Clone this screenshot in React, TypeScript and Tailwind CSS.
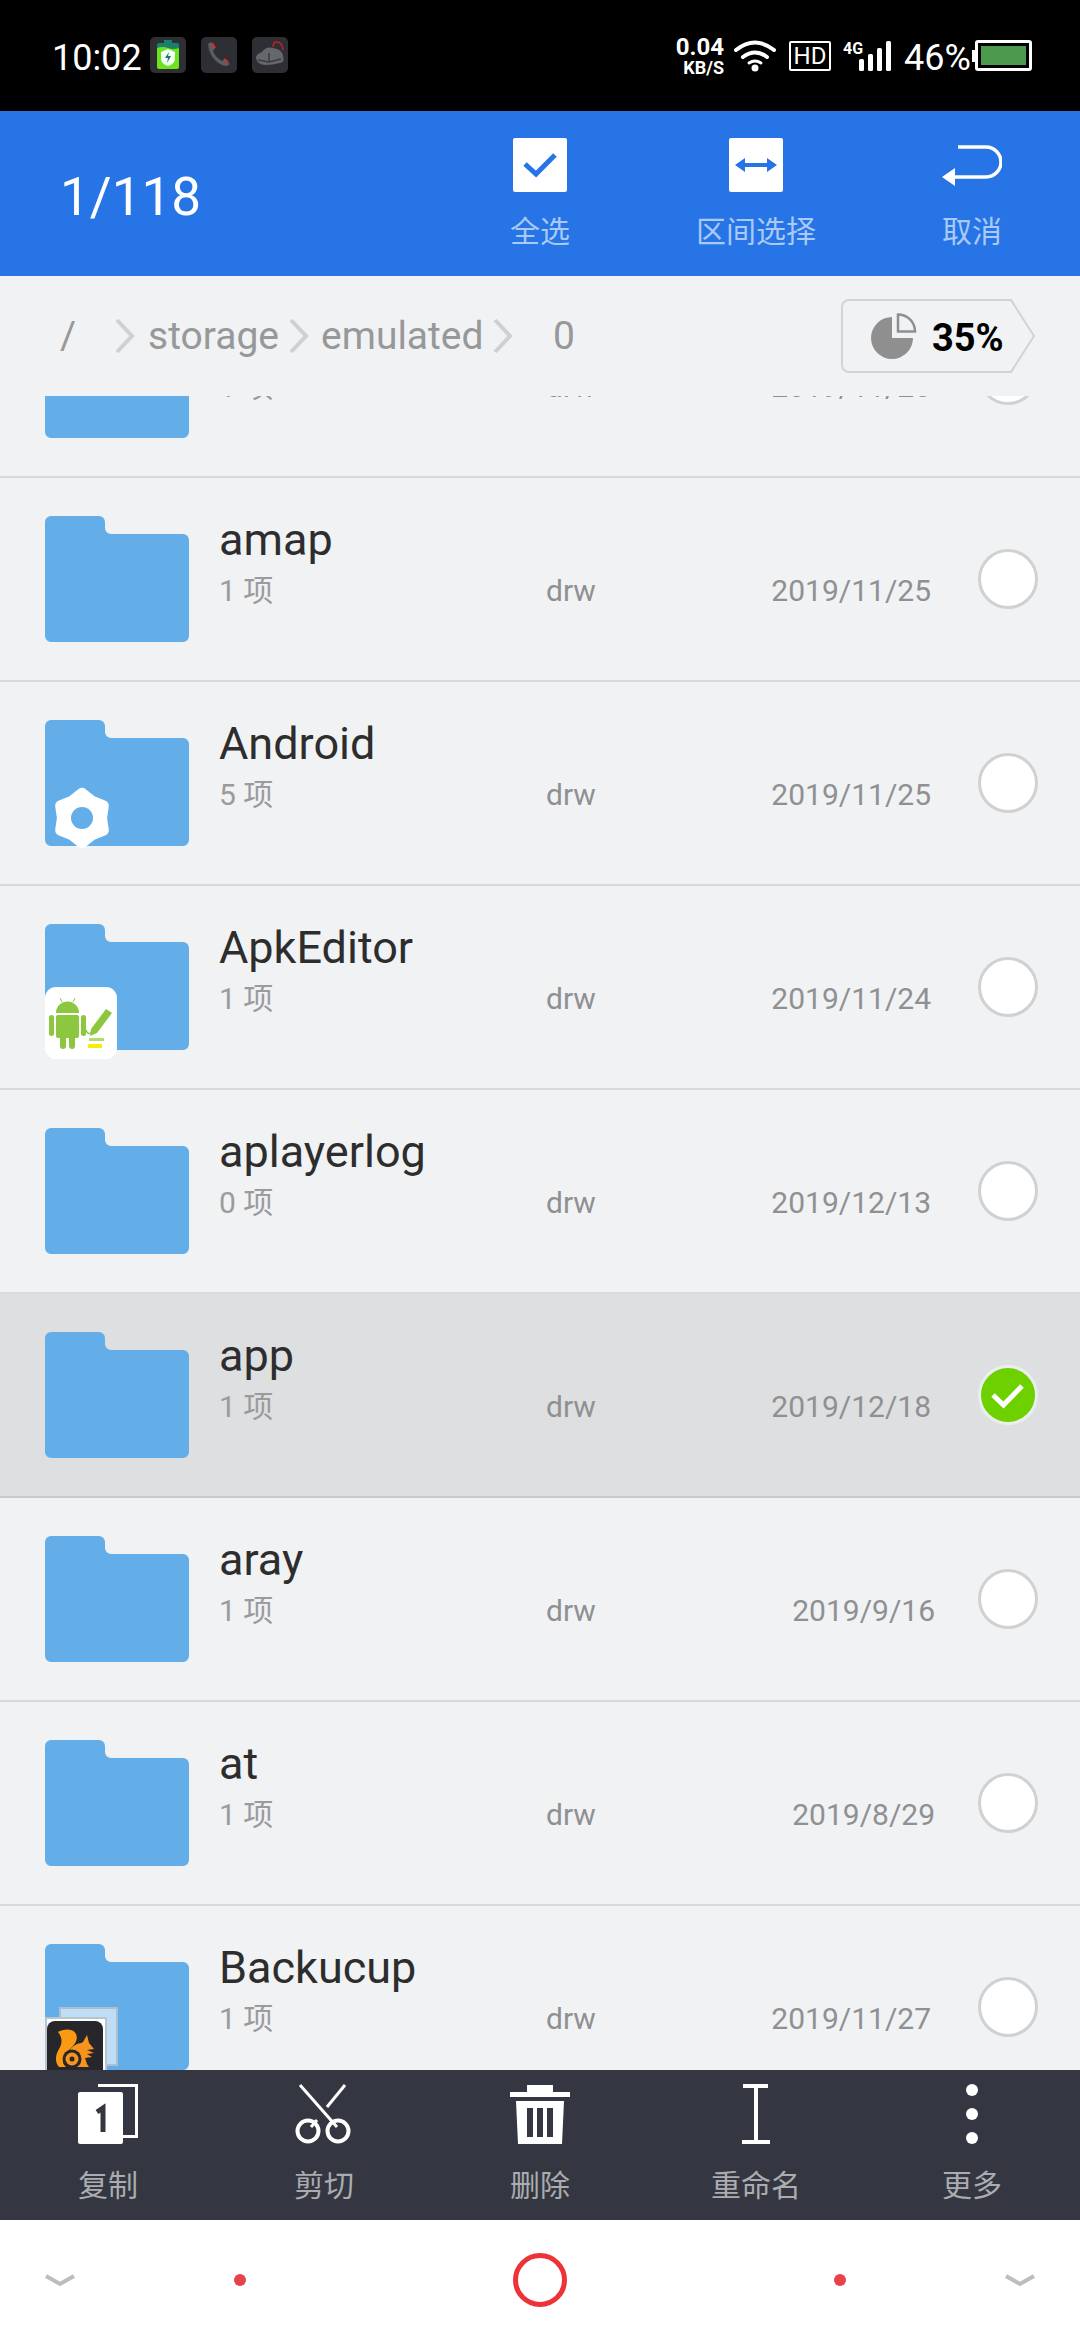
const files = [
  { name: "", count: "1 项", date: "2019/11/20" },
  { name: "amap", count: "1 项", date: "2019/11/25" },
  { name: "Android", count: "5 项", date: "2019/11/25", badge: "gear" },
  { name: "ApkEditor", count: "1 项", date: "2019/11/24", badge: "apk" },
  { name: "aplayerlog", count: "0 项", date: "2019/12/13" },
  { name: "app", count: "1 项", date: "2019/12/18", selected: true },
  { name: "aray", count: "1 项", date: "2019/9/16", short: true },
  { name: "at", count: "1 项", date: "2019/8/29", short: true },
  { name: "Backucup", count: "1 项", date: "2019/11/27", badge: "uc" },
];

const gearPoints = Array.from({ length: 12 }, (_, i) => {
  const r = i % 2 === 0 ? 24 : 19;
  const a = (Math.PI / 6) * i - Math.PI / 2;
  return `${(37 + r * Math.cos(a)).toFixed(1)},${(98 + r * Math.sin(a)).toFixed(1)}`;
}).join(" ");

function Folder({ badge }: { badge?: string }) {
  return (
    <svg width="144" height="136" viewBox="0 0 144 136" className="shrink-0 overflow-visible">
      <path
        d="M6 0H54a6 6 0 0 1 6 6V12a6 6 0 0 0 6 6H138a6 6 0 0 1 6 6V120a6 6 0 0 1-6 6H6a6 6 0 0 1-6-6V6a6 6 0 0 1 6-6Z"
        fill="#63AEE8"
      />
      {badge === "gear" && (
        <g>
          <polygon points={gearPoints} fill="#fff" stroke="#fff" strokeWidth="12" strokeLinejoin="round" />
          <circle cx="37" cy="98" r="11" fill="#63AEE8" />
        </g>
      )}
      {badge === "apk" && (
        <g>
          <rect x="0" y="63" width="72" height="72" rx="11" fill="#fff" />
          <g fill="#8DC63F">
            <path d="M11 89a11.500 11.500 0 0 1 23 0Z" />
            <rect x="11" y="91" width="23" height="23" rx="2" />
            <rect x="4" y="91" width="5" height="21" rx="2.500" />
            <rect x="36" y="91" width="5" height="21" rx="2.500" />
            <rect x="15" y="110" width="6" height="15" rx="3" />
            <rect x="24" y="110" width="6" height="15" rx="3" />
            <path d="M46 105l15-20 6 4-15 20-7 3Z" />
          </g>
          <path d="M15 74l2 4M30 74l-2 4" stroke="#8DC63F" strokeWidth="1" />
          <path d="M41 106q2 6 6 2" stroke="#8DC63F" strokeWidth="1.500" fill="none" />
          <rect x="44" y="114" width="15" height="3" fill="#B5D96B" />
          <rect x="43" y="120" width="14" height="4" fill="#F4F000" />
        </g>
      )}
      {badge === "uc" && (
        <g>
          <rect x="15" y="64" width="57" height="57" fill="#BFDDF5" stroke="#ABBFD0" strokeWidth="2" />
          <rect x="1" y="74" width="60" height="62" fill="#fff" stroke="#B8C4CE" strokeWidth="2" />
          <rect x="2" y="77" width="56" height="60" rx="8" fill="#26262B" />
          <path
            d="M13 88C18 85 28 84 31 90C34 97 28 102 24 106C21 108 20 110 19 113C17 117 18 120 21 123H14C9 117 11 110 14 105C17 100 18 94 13 88Z"
            fill="#FB9A12"
          />
          <path d="M24 107C29 99 35 100 38 98L42 91L44 99L49 105L42 106L49 109L42 110L47 113L40 114L42 120L44 123H24Z" fill="#F7941D" />
          <circle cx="27" cy="115" r="9.500" fill="#26262B" />
          <circle cx="27" cy="115" r="6.500" fill="#F7941D" />
          <circle cx="27" cy="115" r="2.500" fill="#26262B" />
        </g>
      )}
    </svg>
  );
}

function Row({ file }: { file: (typeof files)[number] }) {
  return (
    <div
      className={`flex h-[204px] shrink-0 items-center border-b-2 pl-[45px] ${
        file.selected ? "border-[#C9CACD] bg-[#DEDFE1]" : "border-[#D9DADD]"
      }`}
    >
      <div className="h-[126px] w-[144px] shrink-0">
        <Folder badge={file.badge} />
      </div>
      <div className="ml-[30px] flex w-[712px] flex-col pb-[32px]">
        <div className="h-[52px] text-[45px] leading-[52px] text-[#2D2D2D]">{file.name}</div>
        <div className="mt-[4px] grid grid-cols-[327px_1fr_auto] text-[30px] leading-[42px] text-[#8F9092]">
          <span className="text-[#9A9B9D]">{file.count}</span>
          <span>drw</span>
          <span className={file.short ? "-mr-[4px]" : ""}>{file.date}</span>
        </div>
      </div>
      <div className="ml-[47px]">
        {file.selected ? (
          <svg width="60" height="60" viewBox="0 0 60 60" className="block">
            <circle cx="30" cy="30" r="28.500" fill="#6DD100" stroke="#ECEDEE" strokeWidth="3" />
            <path d="M15 30l10.500 10L44 21" fill="none" stroke="#fff" strokeWidth="5" />
          </svg>
        ) : (
          <div className="h-[60px] w-[60px] rounded-full border-[3px] border-[#D0D1D3] bg-white" />
        )}
      </div>
    </div>
  );
}

function AppTile({ children }: { children: React.ReactNode }) {
  return (
    <div className="flex h-[36px] w-[36px] items-center justify-center rounded-[5px] bg-[#2E2F35]">
      {children}
    </div>
  );
}

function StatusBar() {
  return (
    <div className="flex h-[111px] items-center justify-between bg-black text-white">
      <div className="flex items-center pl-[52px]">
        <span className="mt-[4px] w-[98px] text-[36px] leading-none">10:02</span>
        <div className="mt-[-1px] flex gap-[15px]">
          <AppTile>
            <svg width="30" height="32" viewBox="0 0 30 32">
              <path d="M11 1h8v3h5a2 2 0 0 1 2 2v6H4V6a2 2 0 0 1 2-2h5Z" fill="#1C7F6B" />
              <path d="M4 9q6-2 11 0t11 0v19a2 2 0 0 1-2 2H6a2 2 0 0 1-2-2Z" fill="#6CE31F" />
              <path d="M15 10l7 3v6q0 6-7 8-7-2-7-8v-6Z" fill="#F2FFF2" />
              <path d="M16 13l-4 6h3l-1 5 4-7h-3Z" fill="#127B66" />
            </svg>
          </AppTile>
          <AppTile>
            <svg width="30" height="32" viewBox="0 0 30 32">
              <path d="M4 5l3-2 4 6-2 3q2 6 9 10l3-2 5 5-3 2q-6 0-12-6T4 5Z" fill="#5C5D63" />
              <path d="M8 4l3 5M20 20l4 3" stroke="#E02B2B" strokeWidth="2" />
            </svg>
          </AppTile>
          <AppTile>
            <svg width="30" height="32" viewBox="0 0 30 32">
              <path d="M1 19q0-4 6-6 4-6 11-4 9 1 10 8 2 6-3 7-8 2-14 2-9 0-10-7Z" fill="#66676C" />
              <path d="M3 21l11 2 12-3M14 23V14" stroke="#3A3A3E" strokeWidth="1.500" fill="none" />
              <path d="M18 8q0-5 4-5 5 0 6 8" stroke="#C62020" strokeWidth="1.500" fill="none" />
            </svg>
          </AppTile>
        </div>
      </div>
      <div className="flex items-center pr-[48px]">
        <div className="flex w-[52px] flex-col items-end font-bold leading-none">
          <span className="text-[24px] leading-[22px]">0.04</span>
          <span className="mt-[1px] text-[18px] leading-[17px]">KB/S</span>
        </div>
        <svg width="42" height="32" viewBox="0 0 42 32" className="ml-[10px]">
          <path d="M2 10q19-15 38 0" fill="none" stroke="#fff" strokeWidth="4" strokeLinecap="round" />
          <path d="M9 17q12-9 24 0" fill="none" stroke="#fff" strokeWidth="4" strokeLinecap="round" />
          <path d="M15 23q6-4 12 0" fill="none" stroke="#fff" strokeWidth="3" strokeLinecap="round" />
          <circle cx="21" cy="28" r="3.500" fill="#fff" />
        </svg>
        <div className="ml-[13px] flex h-[30px] w-[42px] items-center justify-center rounded-[2px] border-[2.500px] border-white text-[24px] leading-none">
          HD
        </div>
        <svg width="48" height="32" viewBox="0 0 48 32" className="ml-[12px]">
          <text x="0" y="14" fontSize="16" fontWeight="700" fill="#fff" fontFamily="Roboto">4G</text>
          <rect x="16" y="19" width="5" height="12" rx="1.500" fill="#fff" />
          <rect x="25" y="14" width="5" height="17" rx="1.500" fill="#fff" />
          <rect x="34" y="8" width="5" height="23" rx="1.500" fill="#fff" />
          <rect x="43" y="1" width="5" height="30" rx="1.500" fill="#fff" />
        </svg>
        <span className="ml-[13px] mt-[4px] w-[68px] text-[36px] leading-none">46%</span>
        <div className="h-[12px] w-[3px] bg-white" />
        <div className="flex h-[31px] w-[57px] items-center rounded-[3px] border-[3px] border-white p-[3px]">
          <div className="h-full w-full bg-[#4C9A4E]" />
        </div>
      </div>
    </div>
  );
}

function Header() {
  return (
    <div className="grid h-[165px] grid-cols-[432px_216px_216px_216px] bg-[#2674E6] text-white">
      <div className="flex items-center pl-[60px] pt-[8px] text-[53px] leading-none">1/118</div>
      <div className="flex flex-col items-center pt-[27px]">
        <div className="flex h-[54px] w-[54px] items-center justify-center rounded-[2px] bg-white">
          <svg width="36" height="28" viewBox="0 0 36 28">
            <path d="M3 13l11 10L33 4" fill="none" stroke="#2674E6" strokeWidth="5" />
          </svg>
        </div>
        <span className="mt-[22px] text-[30px] leading-[36px] text-[#A9C9F6]">全选</span>
      </div>
      <div className="flex flex-col items-center pt-[27px]">
        <div className="flex h-[54px] w-[54px] items-center justify-center rounded-[2px] bg-white">
          <svg width="42" height="16" viewBox="0 0 42 16">
            <path d="M0 8l10-7v5h22V1l10 7-10 7v-5H10v5Z" fill="#2674E6" />
          </svg>
        </div>
        <span className="mt-[22px] text-[30px] leading-[36px] text-[#A9C9F6]">区间选择</span>
      </div>
      <div className="flex flex-col items-center pt-[27px]">
        <svg width="60" height="54" viewBox="0 0 60 54" className="block">
          <path d="M16 9H44a15 15 0 0 1 0 30H12" fill="none" stroke="#fff" strokeWidth="3.500" />
          <path d="M0 39l13-9v18Z" fill="#fff" />
        </svg>
        <span className="mt-[22px] text-[30px] leading-[36px] text-[#A9C9F6]">取消</span>
      </div>
    </div>
  );
}

function Chevron() {
  return (
    <svg width="20" height="36" viewBox="0 0 20 36" className="shrink-0">
      <path d="M2 2l15 16L2 34" fill="none" stroke="#CFD0D2" strokeWidth="4" />
    </svg>
  );
}

function Breadcrumb() {
  return (
    <div className="relative flex h-[120px] items-center bg-[#F1F2F4] text-[39px] leading-none text-[#97989A]">
      <span className="ml-[60px] w-[55px]">/</span>
      <Chevron />
      <span className="ml-[13px] w-[130px]">storage</span>
      <span className="ml-[11px]"><Chevron /></span>
      <span className="ml-[12px] w-[162px]">emulated</span>
      <span className="ml-[10px]"><Chevron /></span>
      <span className="ml-[40px]">0</span>
      <div className="relative ml-auto mr-[45px] flex h-[74px] w-[194px] items-center pl-[30px]">
        <svg width="194" height="74" viewBox="0 0 194 74" className="absolute inset-0">
          <path d="M8 1H170L193 37 170 73H8a7 7 0 0 1-7-7V8a7 7 0 0 1 7-7Z" fill="#F1F2F4" stroke="#D2D3D5" strokeWidth="2" />
        </svg>
        <svg width="46" height="46" viewBox="0 0 46 46" className="relative">
          <path d="M21 4a21 21 0 1 0 21 21H21Z" fill="#8F8F8F" />
          <path d="M27 1.500a17 17 0 0 1 17 17H27Z" fill="#F1F2F4" stroke="#8F8F8F" strokeWidth="2.500" />
        </svg>
        <span className="relative ml-[15px] mt-[3px] text-[38px] font-bold text-black">35%</span>
      </div>
    </div>
  );
}

function ActionBar() {
  const actions = [
    {
      label: "复制",
      icon: (
        <svg width="60" height="60" viewBox="0 0 60 60">
          <path d="M20 1.500H58.500V52.500H45" fill="none" stroke="#fff" strokeWidth="3" />
          <rect x="0" y="8" width="45" height="52" rx="2" fill="#fff" />
          <path d="M19 28l6-4v24" fill="none" stroke="#343741" strokeWidth="5" />
        </svg>
      ),
    },
    {
      label: "剪切",
      icon: (
        <svg width="60" height="60" viewBox="0 0 60 60">
          <path d="M6 1L43 43M51 1L33 23M17 43l6-7" fill="none" stroke="#fff" strokeWidth="3" />
          <circle cx="14" cy="47" r="10.500" fill="none" stroke="#fff" strokeWidth="4" />
          <circle cx="44" cy="47" r="10.500" fill="none" stroke="#fff" strokeWidth="4" />
        </svg>
      ),
    },
    {
      label: "删除",
      icon: (
        <svg width="60" height="60" viewBox="0 0 60 60">
          <path d="M17 1H43V8H60V13H0V8H17Z" fill="#fff" />
          <path d="M6 17H54L52 60H8ZM17 24V53H23V24ZM27 24V53H33V24ZM37 24V53H43V24Z" fill="#fff" fillRule="evenodd" />
        </svg>
      ),
    },
    {
      label: "重命名",
      icon: (
        <svg width="30" height="60" viewBox="0 0 30 60">
          <path d="M2 2H27M15 2V58M1 58H29" fill="none" stroke="#fff" strokeWidth="4" />
        </svg>
      ),
    },
    {
      label: "更多",
      icon: (
        <svg width="14" height="60" viewBox="0 0 14 60">
          <circle cx="7" cy="6" r="6" fill="#fff" />
          <circle cx="7" cy="30" r="6" fill="#fff" />
          <circle cx="7" cy="54" r="6" fill="#fff" />
        </svg>
      ),
    },
  ];
  return (
    <div className="grid h-[150px] shrink-0 grid-cols-5 bg-[#343741]">
      {actions.map((a) => (
        <div key={a.label} className="flex flex-col items-center pt-[14px]">
          <div className="flex h-[60px] items-center">{a.icon}</div>
          <span className="mt-[24px] text-[30px] leading-[36px] text-[#ABACAF]">{a.label}</span>
        </div>
      ))}
    </div>
  );
}

function NavBar() {
  const chevron = (
    <svg width="30" height="13" viewBox="0 0 30 13">
      <path d="M1 2l14 8 14-8" fill="none" stroke="#BDBDBD" strokeWidth="4" />
    </svg>
  );
  const dot = <div className="h-[12px] w-[12px] rounded-full bg-[#E8414A]" />;
  return (
    <div className="grid h-[120px] shrink-0 grid-cols-[120px_240px_360px_240px_120px] place-items-center bg-white">
      {chevron}
      {dot}
      <div className="h-[54px] w-[54px] rounded-full border-[5px] border-[#EE3338]" />
      {dot}
      {chevron}
    </div>
  );
}

export default function App() {
  return (
    <div
      className="flex h-[2340px] w-[1080px] flex-col overflow-hidden bg-[#F1F2F4]"
      style={{ fontFamily: 'Roboto, "Noto Sans CJK SC", sans-serif' }}
    >
      <StatusBar />
      <Header />
      <Breadcrumb />
      <div className="min-h-0 flex-1 overflow-hidden">
        <div className="-mt-[122px] flex flex-col">
          {files.map((f, i) => (
            <Row key={i} file={f} />
          ))}
        </div>
      </div>
      <ActionBar />
      <NavBar />
    </div>
  );
}
